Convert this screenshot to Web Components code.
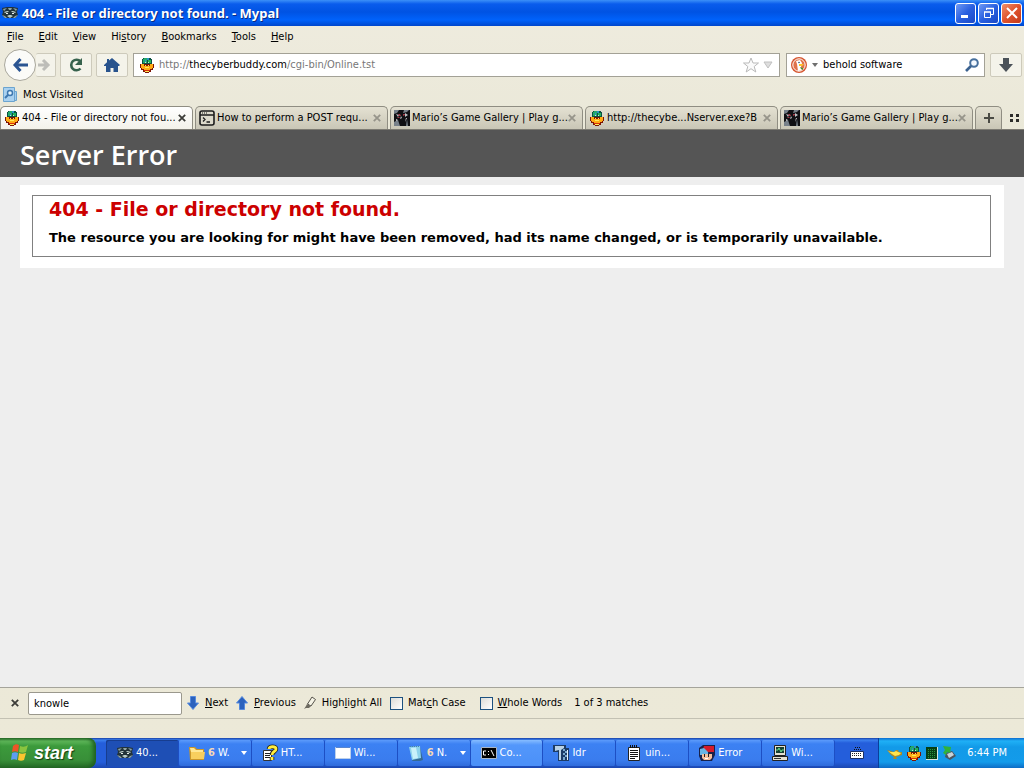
<!DOCTYPE html>
<html lang="en">
<head>
<meta charset="utf-8">
<title>404 - File or directory not found.</title>
<style>
html,body{margin:0;height:100%}
body{font:11px/16px "DejaVu Sans Condensed","DejaVu Sans",sans-serif;color:#000;background:#ece9d8}
</style>
</head>
<body>
<xp-desktop></xp-desktop>
<script>
const ICONS = {
  raccoon: ['0 0 16 16', '<path fill="#22333a" d="M0 3l5-1h6l5 1-1 4 1 3-3 3H3l-3-3 1-3z"/><path fill="#8fa3a3" d="M1 4l4-1-3 3zM15 4l-4-1 3 3zM6 3h4l-1 2H7zM0 10l3 1 2 2H3zM16 10l-3 1-2 2h2z"/><path fill="#b9cac6" d="M2 7l3-1h2L6 7 3 8zM14 7l-3-1H9l1 1 3 1zM5 11l2-1h2l2 1-3 2z"/><path fill="#e8efea" d="M4 8h2v1H4zM10 8h2v1h-2z"/><path d="M7 10h2v2H7z"/>'],
  buddy: ['0 0 16 16', '<path d="M0 1h2v1H0zM2 2h1v2H2zM3 4h1v1H3zM14 1h2v1h-2zM13 2h1v2h-1zM12 4h1v1h-1z"/><path fill="#0b5140" d="M4 1h8v1h1v5H3V2h1z"/><path fill="#22a86a" d="M5 1h3v5H4V2h1z"/><path fill="#2b8fc4" d="M8 1h2v2H8zM6 3h1v2H6z"/><path fill="#23b25b" d="M9 3h3v3H9z"/><path fill="#c4ecd6" d="M6 5h1v1H6zM9 5h1v1H9z"/><path fill="#7d1405" d="M1 7h14v4h-1v2h-2v2h-2v1H6v-1H4v-2H2v-2H1z"/><path fill="#ffab14" d="M2 7h3v2h6V7h3v4h-1v1h-2v2H5v-2H3v-1H2z"/><path d="M5 6h6v1h2v1h-1v1H9v1H7V9H4V8H3V7h2zM4 10h2v1h1v1h2v-1h1v-1h2v1h-1v1h-2v1H7v-1H5v-1H4z"/><path fill="#ffec57" d="M6 8h1v1H6zM9 8h1v1H9zM6 10h4v1H6zM6 14h4v1H6z"/><path fill="#d92f0c" d="M5 13h6v1H5z"/>'],
  back: ['0 0 16 16', '<path fill="none" stroke="#2b5592" stroke-width="3" d="M8.500 2L3 8l5.500 6M3 8h13"/>'],
  forward: ['0 0 16 16', '<path fill="none" stroke="#bdbdb8" stroke-width="3" d="M5 3l5 5-5 5M9 8H0"/>'],
  reload: ['0 0 16 16', '<path fill="none" stroke="#37624d" stroke-width="2.600" d="M12.500 11.500a5.300 5.300 0 1 1 0-7"/><path fill="#37624d" d="M14 1v7H7z"/>'],
  home: ['0 0 16 16', '<path fill="#28538d" d="M8 1l8 7-1 1h-1v6H9.500v-4h-3v4H2V9H0V8l3-2.700V2h2v1.600z"/>'],
  star: ['0 0 16 16', '<path fill="#fafafa" stroke="#b9b9b9" d="M8 1l2 5h5.500l-4.300 3.500 1.600 5.500L8 11.700 3.200 15l1.600-5.500L.5 6H6z"/>'],
  dropgray: ['0 0 10 8', '<path fill="#dedede" stroke="#c0c0c0" d="M1 1h8L5 7z"/>'],
  caret: ['0 0 6 4', '<path fill="#6f6f6f" d="M0 0h6L3 4z"/>'],
  caretwhite: ['0 0 6 4', '<path fill="#fff" d="M0 0h6L3 4z"/>'],
  duck: ['0 0 16 16', '<circle cx="8" cy="8" r="8" fill="#d5532c"/><circle cx="8" cy="8" r="6.200" fill="#e0724c" stroke="#fff"/><path fill="#fff" d="M5 4l4-1 2 3-1 4 1 3-4 1-1-7z"/><path fill="#ffc12b" d="M8 7h5l-2 2H8z"/><path fill="#4b8d34" d="M9 10l3 1v2l-2-1z"/><circle cx="8" cy="5.500" r=".8" fill="#24517a"/>'],
  lens: ['0 0 14 14', '<circle cx="9" cy="5" r="3.800" fill="#f4f9ff" stroke="#47709d" stroke-width="2"/><path stroke="#3b6290" stroke-width="2.600" d="M6 8L1 13"/>'],
  download: ['0 0 14 14', '<path fill="#4b5259" d="M4 0h6v6h4l-7 8-7-8h4z"/>'],
  visited: ['0 0 16 16', '<path fill="#a3cdee" stroke="#6ba4cf" d="M11.500 4.500h2v9h-2z"/><path fill="#a9d1f0" stroke="#6ba4cf" d="M.5.5h11v14H.5z"/><circle cx="7" cy="6" r="2.500" fill="#e5f4fd" stroke="#3d78b0" stroke-width="1.500"/><path stroke="#3d78b0" stroke-width="2" d="M5 8l-3 3"/>'],
  terminal: ['0 0 16 16', '<rect x="1" y="1" width="14" height="14" rx="2" fill="#dddacb" stroke="#1d1d1d" stroke-width="1.600"/><path stroke="#1d1d1d" stroke-width="1.300" fill="none" d="M1 5h14M4 7.500L6 9.500 4 11.500M7.500 12H11"/><path fill="#1d1d1d" d="M3 2.500h1v1H3zM5 2.500h1v1H5zM7 2.500h1v1H7z"/>'],
  mario: ['0 0 16 16', '<path fill="#101014" d="M0 0h16v16H0z"/><path fill="#77808a" d="M0 0h5L3 3 0 4zM10 0h5l-2 2-4 1zM0 12l4-2 2 6H0zM13 9l1 7h-2z"/><path fill="#bdc2c6" d="M2 4l3 1-1 2zM11 3l3 2-3 2zM7 6l1 2-2 1z"/><path fill="#a23a48" d="M4 4h2l1 2H5zM9 4h2v1L9 6zM3 7h2l1 1H4z"/><path fill="#d8d8dc" d="M2 9l2 1-2 1zM12 8h1l-2 4z"/>'],
  close: ['0 0 8 8', '<path stroke="currentColor" stroke-width="1.800" d="M.8.8l6.400 6.400M7.200.8L.8 7.200"/>'],
  plus: ['0 0 10 10', '<path stroke="#4a4a44" stroke-width="2" d="M5 0v10M0 5h10"/>'],
  grid: ['0 0 9 8', '<path fill="#2c2c2a" d="M0 0h3v3H0zM6 0h3v3H6zM0 5h3v3H0zM6 5h3v3H6z"/>'],
  min: ['0 0 14 14', '<path fill="#fff" d="M2 9h7v3H2z"/>'],
  restore: ['0 0 14 14', '<path fill="none" stroke="#fff" d="M4.500 4V2.500h7v6H9"/><path stroke="#fff" stroke-width="1.500" d="M4 2.500h8M2 6h7"/><path fill="none" stroke="#fff" d="M2.500 6v5.500h6V6"/>'],
  exit: ['0 0 14 14', '<path stroke="#fff" stroke-width="2" d="M2 2l10 10M12 2L2 12"/>'],
  down: ['0 0 12 14', '<path fill="#2c62bd" stroke="#558ade" d="M3.500.5h5V7h3L6 13.500.5 7h3z"/>'],
  up: ['0 0 12 14', '<path fill="#2c62bd" stroke="#558ade" d="M3.500 13.500h5V7h3L6 .5.5 7h3z"/>'],
  marker: ['0 0 12 14', '<path fill="#f5f3e6" stroke="#55524a" d="M8 1l3.500 2.500L7 10 3.500 8z"/><path fill="#6d6a60" d="M3 8l4 2-2 2H2l-2 1 2-3z"/>'],
  flag: ['0 0 20 18', '<path fill="#ee5527" d="M3 2c2-2 4-2 6-1L8 8C6 7 4 7 2 8z"/><path fill="#8ac43f" d="M10 2c3 1 5 1 8-1l-2 7c-2 1-5 1-7 0z"/><path fill="#5d9df0" d="M2 9c2-1 4-1 6 0l-1 7c-2-1-4-1-6 0z"/><path fill="#fbc52f" d="M9 9c2 1 4 1 7 0l-2 7c-2 1-4 1-6 0z"/>'],
  folder: ['0 0 16 16', '<path fill="#c9962b" d="M0 2h6l2 2h7v11H1z"/><path fill="#ffe793" d="M1 3h4l2 2h7v2H2z"/><path fill="#f8cf5e" d="M2 7h14l-1 7H2z"/>'],
  help: ['0 0 16 16', '<path fill="#fff" stroke="#333" d="M1.500 5.500h8v10h-8z"/><path stroke="#222" d="M3 8.500h5M3 10.500h5M3 12.500h5"/><path fill="none" stroke="#222" stroke-width="4.500" d="M7 4c0-3 7-3 7 0 0 3-4 2-4 6M10 12v3"/><path fill="none" stroke="#ffee3d" stroke-width="2.800" d="M7 4c0-3 7-3 7 0 0 3-4 2-4 6M10 12v3"/>'],
  window: ['0 0 16 16', '<path fill="#fff" stroke="#bcd0ea" d="M.5 2.500h15v11H.5z"/><path fill="#5a86cf" d="M1 2h14v1H1z"/>'],
  notebook: ['0 0 16 16', '<path fill="#356a94" d="M12 2l3 13-3 1H4z"/><path fill="#8dd3ec" d="M1 2l11-1 1 12-9 2z"/><path fill="#c9f1fa" d="M3 3l5-.5L10 13l-5 1z"/><path stroke="#4b86a4" stroke-dasharray="1 1" d="M2 1.500h10"/>'],
  cmd: ['0 0 16 12', '<path fill="#000" stroke="#a9b5c4" d="M.5.5h15v11H.5z"/><path fill="none" stroke="#fff" d="M5 4H2.500v4H5M7.500 4v1M7.500 7v1M10 3l3 6"/>'],
  zip: ['0 0 16 16', '<path fill="#1c3b66" d="M0 0h13v3h3v13H5V7H0z"/><path fill="#b9d2e6" d="M2 1h9v2L8 5v10H6V5L2 6z"/><path fill="#79a8cf" d="M10 4h2v2h-2zM12 6h2v2h-2zM10 8h2v2h-2zM12 10h2v2h-2zM10 12h2v3h-2z"/><path stroke="#e8f1f8" d="M14.500 5v10"/>'],
  notepad: ['0 0 16 16', '<path fill="#fff" stroke="#222" d="M2.500 2.500h11v13h-11z"/><path stroke="#111" d="M4 5.500h8M4 7.500h8M4 9.500h8M4 11.500h8M4 13.500h5M4.500 0v3M6.500 0v3M8.500 0v3M10.500 0v3"/>'],
  face: ['0 0 16 16', '<path fill="#18224b" d="M0 3l4-3h12v10l-3 6H2L0 11z"/><path fill="#d51c2b" d="M5 1h10v6H8L4 4z"/><path fill="#67b5e6" d="M1 4l4-1 4 4v3H1z"/><path fill="#f5bf9c" d="M3 9h10v4l-2 2H5l-2-2z"/><path fill="#222" d="M5 9h1v3H5zM9 9h1v3H9z"/><path fill="#fff" d="M6 13h3v1H6z"/>'],
  computer: ['0 0 16 16', '<path fill="#e4e1d3" stroke="#222" d="M2.500.5h11v10h-11zM.5 11.500h15v4H.5z"/><path fill="#153f33" d="M4 2h8v6H4z"/><path fill="none" stroke="#6de08f" d="M4 5h2l1-2 2 4 1-2h2"/><path stroke="#333" d="M2 13.500h7"/>'],
  keyboard: ['0 0 14 12', '<path fill="none" stroke="#111" stroke-dasharray="1 1" d="M4 2.500h8M5 .5h6"/><path fill="#fff" stroke="#1a2f66" d="M.5 4.500h13v7H.5z"/><path stroke="#222" stroke-dasharray="1 1" d="M2 6.500h10M2 8.500h10"/>'],
  lamp: ['0 0 16 16', '<path fill="#a98a28" d="M0 5l4 1 3 1 2-2h2l1 2h3v3l-3 1-3 1 1 2H6l1-2-3-2z"/><path fill="#ffe44d" d="M1 6l3 1h3l2-1 2 1 3 1-2 2-4 1-3-2z"/>'],
  chip: ['0 0 14 16', '<path fill="#d8e4da" d="M1 2h12v13H1z"/><path fill="#063f13" d="M1 2h11v12H1z"/><path stroke="#28933f" stroke-dasharray="1 1" d="M3 4.500h8M3 6.500h8M3 8.500h8M3 10.500h8M3 12.500h8"/>'],
  eject: ['0 0 16 16', '<path fill="#4a5560" d="M4 8l6-2 4 5-6 4-5-3z"/><path fill="#c7d2da" d="M5 9l5-2 2 3-5 3z"/><path fill="#30b23a" d="M1 1l8 1-1 6-3-1-1 3-3-2 2-3z"/>']
};

function define(name, html, setup) {
  const t = document.createElement('template');
  t.innerHTML = html;
  customElements.define(name, class extends HTMLElement {
    constructor() {
      super();
      this.attachShadow({mode: 'open'}).append(t.content.cloneNode(true));
    }
    connectedCallback() { if (setup) setup(this, this.shadowRoot); }
  });
}
const BTN = 'button{font:inherit;color:inherit;background:none;border:0;padding:0;margin:0;display:flex;align-items:center}';

define('ui-icon', '<style>:host{display:block;flex:none;width:16px;height:16px}svg{display:block;width:100%;height:100%;overflow:visible}</style>', (el, r) => {
  const [box, body] = ICONS[el.getAttribute('name')];
  const [, , w, h] = box.split(' ');
  el.style.width = w + 'px';
  el.style.height = h + 'px';
  r.innerHTML += `<svg viewBox="${box}" fill="none" aria-hidden="true">${body}</svg>`;
});

define('title-bar', `<style>${BTN}
:host{display:flex;align-items:center;height:26px;padding:0 2px;gap:4px;color:#fff;background:linear-gradient(#3c90f8 0,#0a5cec 4px,#0053e3 12px,#0062fb 20px,#0046cc 26px)}
h1{flex:1;margin:0;font:bold 13px/20px "Noto Sans",sans-serif;text-shadow:1px 1px #0a2a82}
.b{box-sizing:border-box;width:21px;height:21px;justify-content:center;border:1px solid #fff;border-radius:3px;background:linear-gradient(135deg,#6f9af5,#2a60e0 50%,#1a48c6)}
.x{background:linear-gradient(135deg,#f0906c,#e0532c 50%,#c2391a)}
div{display:flex;gap:2px}
</style><ui-icon name="raccoon"></ui-icon><h1>404 - File or directory not found. - Mypal</h1>
<div><button class="b" aria-label="Minimize"><ui-icon name="min"></ui-icon></button><button class="b" aria-label="Restore"><ui-icon name="restore"></ui-icon></button><button class="b x" aria-label="Close"><ui-icon name="exit"></ui-icon></button></div>`);

define('menu-bar', `<style>${BTN}:host{display:flex;align-items:flex-end;height:21px;padding:0 7px;gap:15px}button{display:block;height:20px;line-height:18px}</style>
<button><u>F</u>ile</button><button><u>E</u>dit</button><button><u>V</u>iew</button><button>Hi<u>s</u>tory</button><button><u>B</u>ookmarks</button><button><u>T</u>ools</button><button><u>H</u>elp</button>`);

define('nav-bar', `<style>${BTN}
:host{display:flex;align-items:center;height:36px;padding:0 2px 0 4px;gap:4px}
.b{box-sizing:border-box;width:32px;height:24px;justify-content:center;border:1px solid #cdcabb;border-radius:2px;background:#f4f3ea}
.pair{display:flex;align-items:center}
.back{box-sizing:border-box;width:32px;height:32px;justify-content:center;border:1px solid #a9a79c;border-radius:50%;background:#fbfbf8}
.fwd{width:20px;border-left:0}
.field{box-sizing:border-box;display:flex;align-items:center;height:24px;border:1px solid #a3a196;background:#fff}
.url{flex:1;gap:4px;padding:0 6px 0 5px;margin-left:1px}
.search{width:199px;margin:0 1px 0 2px;gap:5px;padding:0 5px 0 4px}
input{font:inherit;border:0;padding:0;margin:0;min-width:0;width:100%;background:none;outline:0;color:#000}
a{flex:1;color:#777;text-decoration:none}b{font-weight:normal;color:#000}
</style>
<div class="pair"><button class="back" aria-label="Back"><ui-icon name="back"></ui-icon></button><button class="b fwd" aria-label="Forward"><ui-icon name="forward"></ui-icon></button></div>
<button class="b" aria-label="Reload"><ui-icon name="reload"></ui-icon></button>
<button class="b" aria-label="Home"><ui-icon name="home"></ui-icon></button>
<div class="field url"><ui-icon name="buddy"></ui-icon><a href="#">http://<b>thecyberbuddy.com</b>/cgi-bin/Online.tst</a><button aria-label="Bookmark this page"><ui-icon name="star"></ui-icon></button><button aria-label="History"><ui-icon name="dropgray"></ui-icon></button></div>
<div class="field search"><ui-icon name="duck"></ui-icon><ui-icon name="caret"></ui-icon><input aria-label="Search" value="behold software"><button aria-label="Go"><ui-icon name="lens"></ui-icon></button></div>
<button class="b" aria-label="Downloads"><ui-icon name="download"></ui-icon></button>`);

define('bookmark-bar', `<style>${BTN}:host{display:flex;height:23px;padding:0 3px}button{gap:4px}</style><button><ui-icon name="visited"></ui-icon>Most Visited</button>`);

define('browser-tab', `<style>${BTN}
:host{box-sizing:border-box;display:flex;align-items:center;flex:1;min-width:0;height:23px;max-width:193px;padding:0 6px 0 3px;border:1px solid #8f8d82;border-bottom:0;border-radius:5px 5px 0 0;background:linear-gradient(#e4e1d2,#c9c6b6)}
:host([active]){background:linear-gradient(#fff,#f3f2ea)}
.label{flex:1;min-width:0;gap:2px}
span{white-space:nowrap}
.x{color:#96948a}:host([active]) .x{color:#3c3c38}
</style><button class="label"><span class="i"></span><span><slot></slot></span></button><button class="x" aria-label="Close tab"><ui-icon name="close"></ui-icon></button>`, (el, r) => {
  r.querySelector('.i').innerHTML = `<ui-icon name="${el.getAttribute('icon')}"></ui-icon>`;
});

define('tab-strip', `<style>${BTN}
:host{box-sizing:border-box;display:flex;align-items:flex-end;height:24px;gap:2px;padding-right:5px;border-bottom:1px solid #7d7b73}
.new{box-sizing:border-box;width:27px;height:23px;justify-content:center;border:1px solid #8f8d82;border-bottom:0;border-radius:5px 5px 0 0;background:linear-gradient(#e4e1d2,#c9c6b6)}
.all{width:14px;height:23px;justify-content:flex-end;margin-left:auto}
</style><browser-tab icon="buddy" active>404 - File or directory not fou...</browser-tab><browser-tab icon="terminal">How to perform a POST requ...</browser-tab><browser-tab icon="mario">Mario’s Game Gallery | Play g...</browser-tab><browser-tab icon="buddy">http://thecybe...Nserver.exe?B</browser-tab><browser-tab icon="mario">Mario’s Game Gallery | Play g...</browser-tab>
<button class="new" aria-label="New tab"><ui-icon name="plus"></ui-icon></button><button class="all" aria-label="List all tabs"><ui-icon name="grid"></ui-icon></button>`);

define('error-page', `<style>
:host{display:block;flex:1;background:#eee}
header{height:47px;padding:0 20px;background:#555}
h1{margin:0;font:600 27px/50px "Open Sans","Noto Sans",sans-serif;color:#fff}
main{margin:8px 20px 0;padding:10px 13px 11px 12px;background:#fff}
section{border:1px solid #808080;padding:0 16px 6px}
h2{margin:0;font:bold 19px/26px "DejaVu Sans",sans-serif;color:#c00}
h3{margin:0;padding-top:4px;font:bold 13px/24px "DejaVu Sans",sans-serif}
</style><header><h1>Server Error</h1></header><main><section><h2>404 - File or directory not found.</h2><h3>The resource you are looking for might have been removed, had its name changed, or is temporarily unavailable.</h3></section></main>`);

define('find-bar', `<style>${BTN}
:host{display:flex;align-items:center;height:30px;padding:0 11px;border-top:1px solid #a5a49b;border-bottom:1px solid #c3c1b3;gap:8px}
.x{color:#3c3c38;padding-right:1px}
.q{box-sizing:border-box;width:154px;height:23px;font:inherit;border:1px solid #9a988d;border-radius:2px;padding:0 5px;background:#fff;color:#000;margin-right:-3px}
button{gap:6px}span{white-space:nowrap}
label{display:flex;align-items:center;gap:5px}label+label{margin-left:6px}
label+output{margin-left:4px}
.c{appearance:none;box-sizing:border-box;width:13px;height:13px;margin:0;border:1px solid #1c5180;background:linear-gradient(135deg,#dcdcd7,#fff)}
</style><button class="x" aria-label="Close find bar"><ui-icon name="close"></ui-icon></button><input class="q" aria-label="Find in page" value="knowle">
<button><ui-icon name="down"></ui-icon><span><u>N</u>ext</span></button><button><ui-icon name="up"></ui-icon><span><u>P</u>revious</span></button><button><ui-icon name="marker"></ui-icon><span>High<u>l</u>ight All</span></button>
<label><input class="c" type="checkbox"><span>Mat<u>c</u>h Case</span></label><label><input class="c" type="checkbox"><span><u>W</u>hole Words</span></label><output>1 of 3 matches</output>`);

define('task-button', `<style>${BTN}
:host{display:block;flex:1;min-width:0;max-width:73px}
button{box-sizing:border-box;width:100%;height:26px;padding:0 4px 0 10px;gap:3px;color:#fff;white-space:nowrap;border-radius:2px;border-right:1px solid #1d4fc4;background:linear-gradient(#5c9bfb,#3c81f3 4px,#3a7cee 20px,#2f6bdb)}
:host([on]) button{background:#1e4fb5;padding-left:11px;box-shadow:inset 1px 1px #173d8f}
:host([flash]) button{background:linear-gradient(#86bcff,#5397fb 5px,#4b90f8)}
.a{margin-left:auto}
</style><button><span class="i"></span><span><slot></slot></span></button>`, (el, r) => {
  r.querySelector('.i').innerHTML = `<ui-icon name="${el.getAttribute('icon')}"></ui-icon>`;
  if (el.hasAttribute('group')) r.querySelector('button').insertAdjacentHTML('beforeend', '<ui-icon class="a" name="caretwhite"></ui-icon>');
});

define('task-bar', `<style>${BTN}
:host{display:flex;height:30px;color:#fff;background:linear-gradient(#1941a5 0,#3b80ee 2px,#245edb 5px,#245edb 24px,#1b47b0 30px)}
.start{width:96px;gap:4px;padding:0 10px;border-radius:0 8px 8px 0;background:linear-gradient(#2c6f2c,#5fb85a 3px,#3c9a3c 8px,#388f38 22px,#256a26);box-shadow:inset -3px 0 4px #1f5f20;font:italic bold 18px/24px "Liberation Sans",sans-serif;text-shadow:1px 1px 1px #123c12}
nav{flex:1;display:flex;align-items:center;padding-left:10px;min-width:0}
.kb{width:43px;justify-content:center}
.tray{display:flex;align-items:center;box-sizing:border-box;width:146px;padding:0 17px 0 8px;gap:3px;border-left:1px solid #0a3f9c;background:linear-gradient(#0d6ccf,#1fb0f6 3px,#129ae8 9px,#139bea 24px,#0d6cc5)}
time{margin-left:auto;white-space:nowrap}
b{color:#f6d9b5}
</style><button class="start"><ui-icon name="flag"></ui-icon>start</button>
<nav><task-button icon="raccoon" on>40...</task-button><task-button icon="folder" group><b>6</b> W.</task-button><task-button icon="help">HT...</task-button><task-button icon="window">Wi...</task-button><task-button icon="notebook" group><b>6</b> N.</task-button><task-button icon="cmd" flash>Co...</task-button><task-button icon="zip">Idr</task-button><task-button icon="notepad">uin...</task-button><task-button icon="face">Error</task-button><task-button icon="computer">Wi...</task-button></nav>
<button class="kb" aria-label="On-screen keyboard"><ui-icon name="keyboard"></ui-icon></button>
<div class="tray"><ui-icon name="lamp"></ui-icon><ui-icon name="buddy"></ui-icon><ui-icon name="chip"></ui-icon><ui-icon name="eject"></ui-icon><time>6:44 PM</time></div>`);

define('xp-desktop', `<style>:host{display:flex;flex-direction:column;min-height:100vh;background:linear-gradient(#efecdf,#eae8d8 130px,#ece9d8)}.status{height:19px}</style>
<title-bar></title-bar><menu-bar></menu-bar><nav-bar></nav-bar><bookmark-bar></bookmark-bar><tab-strip></tab-strip><error-page></error-page><find-bar></find-bar><div class="status"></div><task-bar></task-bar>`);
</script>
</body>
</html>
